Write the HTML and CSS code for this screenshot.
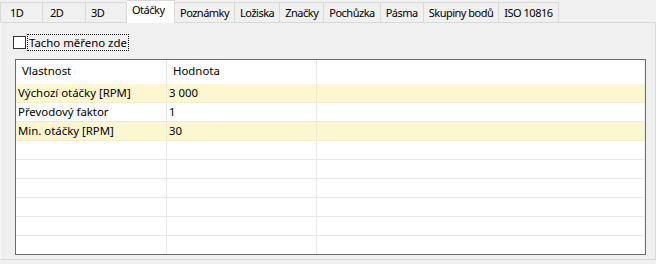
FILE: index.html
```html
<!DOCTYPE html>
<html>
<head>
    <meta charset="UTF-8">
    <title>Otáčky</title>
    <link rel="stylesheet" href="styles.css">
</head>
<body>
    <div class="tabs">
        <div class="tab">1D</div>
        <div class="tab">2D</div>
        <div class="tab">3D</div>
        <div class="tab active">Otáčky</div>
        <div class="tab">Poznámky</div>
        <div class="tab">Ložiska</div>
        <div class="tab">Značky</div>
        <div class="tab">Pochůzka</div>
        <div class="tab">Pásma</div>
        <div class="tab">Skupiny bodů</div>
        <div class="tab">ISO 10816</div>
    </div>

    <div class="page">
        <label class="check-row">
            <span class="check-box"></span>
            <span class="check-label">Tacho měřeno zde</span>
        </label>

        <div class="grid">
            <div class="row header">
                <div class="cell">Vlastnost</div>
                <div class="cell">Hodnota</div>
                <div class="cell"></div>
            </div>
            <div class="row odd">
                <div class="cell">Výchozí otáčky [RPM]</div>
                <div class="cell">3 000</div>
                <div class="cell"></div>
            </div>
            <div class="row">
                <div class="cell">Převodový faktor</div>
                <div class="cell">1</div>
                <div class="cell"></div>
            </div>
            <div class="row odd">
                <div class="cell">Min. otáčky [RPM]</div>
                <div class="cell">30</div>
                <div class="cell"></div>
            </div>
            <div class="row"><div class="cell"></div><div class="cell"></div><div class="cell"></div></div>
            <div class="row"><div class="cell"></div><div class="cell"></div><div class="cell"></div></div>
            <div class="row"><div class="cell"></div><div class="cell"></div><div class="cell"></div></div>
            <div class="row"><div class="cell"></div><div class="cell"></div><div class="cell"></div></div>
            <div class="row"><div class="cell"></div><div class="cell"></div><div class="cell"></div></div>
            <div class="row last"><div class="cell"></div><div class="cell"></div><div class="cell"></div></div>
        </div>
    </div>
</body>
</html>
```

FILE: styles.css
```css
* {
    box-sizing: border-box;
}
body {
    margin: 0;
    width: 656px;
    height: 264px;
    overflow: hidden;
    background: #f0f0f0;
    font-family: "Noto Sans", sans-serif;
    font-size: 11.4px;
    color: #000;
}

/* Tab strip */
.tabs {
    display: flex;
    align-items: flex-end;
    height: 22px;
    position: relative;
    z-index: 1;
}
.tab {
    height: 20px;
    min-width: 43px;
    padding: 0 5px;
    font-size: 11px;
    letter-spacing: -0.5px;
    line-height: 19px;
    border: 1px solid #d9d9d9;
    border-bottom: none;
    border-left: none;
    background: #f0f0f0;
    white-space: nowrap;
}
.tab:first-child {
    padding-left: 9px;
    border-left: 1px solid #d9d9d9;
}
.tab:nth-child(2) {
    padding-left: 7px;
}
.tab:nth-child(3) {
    min-width: 41px;
}
.tab.active {
    height: 23px;
    min-width: 48px;
    line-height: 17px;
    background: #fff;
    margin-bottom: -1px;
}

/* Tab page */
.page {
    height: 238px;
    border: 1px solid #d9d9d9;
    border-left-color: #fafafa;
    padding: 11px 10px 0 14px;
}
.check-row {
    display: flex;
    align-items: center;
    height: 16px;
    margin-left: -2px;
}
.check-box {
    width: 13px;
    height: 13px;
    border: 1px solid #333;
    background: #fff;
    margin-right: 2px;
}
.check-label {
    outline: 1px dotted #000;
    padding: 0 1px;
    line-height: 15px;
}

/* Property grid */
.grid {
    margin-top: 9px;
    width: 631px;
    height: 196px;
    border: 1px solid #6b6b6b;
    background: #fff;
    overflow: hidden;
}
.row {
    display: grid;
    grid-template-columns: 151px 150px 1fr;
    height: 19px;
    line-height: 18px;
}
.row .cell {
    padding-left: 2px;
    border-right: 1px solid #e8e8e8;
    border-bottom: 1px solid #e8e8e8;
    white-space: nowrap;
}
.row .cell:last-child {
    border-right: 1px solid #f4f4f4;
}
.row.header {
    height: 24px;
    line-height: 22px;
}
.row.header .cell {
    padding-left: 6px;
    border-bottom: none;
}
.row.odd {
    background: #fdf7d0;
}
.row.odd .cell {
    border-bottom-color: #f5efc8;
    border-right-color: #f0ead0;
}
.row.last .cell {
    border-bottom: none;
}
```
